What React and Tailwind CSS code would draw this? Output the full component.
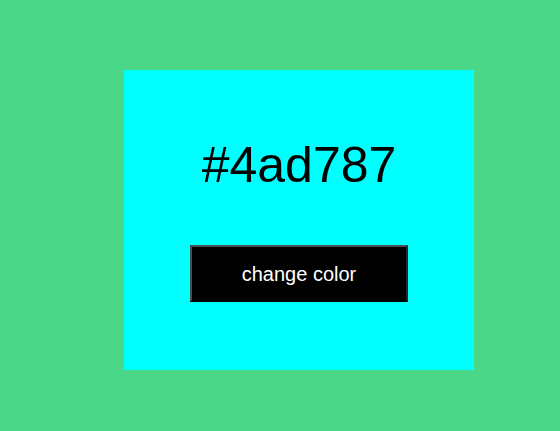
import React, { useState } from 'react';

const colors = ['#4ad787', '#f59e0b', '#6366f1', '#ef4444', '#14b8a6'];

export default function App() {
  const [idx, setIdx] = useState(0);
  const color = colors[idx];
  return (
    <div
      className="w-[560px] h-[431px] pt-[70px] pl-[124px] font-['Liberation_Sans',Arial,sans-serif]"
      style={{ backgroundColor: color }}
    >
      <div className="w-[350px] h-[300px] bg-[#00ffff] flex flex-col items-center pt-[70px]">
        <h1 className="text-[50px] leading-[50px] text-black">{color}</h1>
        <button
          className="mt-[55px] w-[218px] h-[57px] bg-black text-white text-[20px] border-2 border-[#4d4d4d] border-b-black border-r-[#262626]"
          onClick={() => setIdx((idx + 1) % colors.length)}
        >
          change color
        </button>
      </div>
    </div>
  );
}
